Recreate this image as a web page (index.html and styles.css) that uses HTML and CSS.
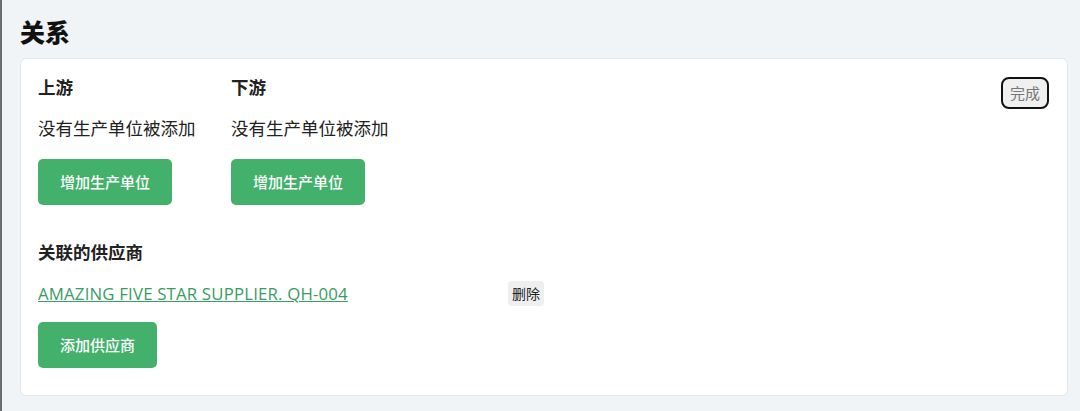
FILE: index.html
```html
<!DOCTYPE html>
<html lang="zh-CN">
<head>
    <meta charset="UTF-8">
    <meta name="viewport" content="width=device-width, initial-scale=1.0">
    <title>关系</title>
    <link rel="stylesheet" href="styles.css">
</head>
<body>
    <main class="page">
        <h1 class="page-title">关系</h1>
        <section class="card">
            <div class="units">
                <div class="unit-col unit-col-up">
                    <h3 class="section-title">上游</h3>
                    <p class="empty">没有生产单位被添加</p>
                    <button class="btn-green">增加生产单位</button>
                </div>
                <div class="unit-col">
                    <h3 class="section-title">下游</h3>
                    <p class="empty">没有生产单位被添加</p>
                    <button class="btn-green">增加生产单位</button>
                </div>
                <button class="btn-done">完成</button>
            </div>

            <h3 class="section-title suppliers-title">关联的供应商</h3>
            <div class="supplier-row">
                <a class="supplier-link" href="#">AMAZING FIVE STAR SUPPLIER. QH-004</a>
                <button class="btn-delete">删除</button>
            </div>
            <button class="btn-green btn-add">添加供应商</button>
        </section>
    </main>
</body>
</html>
```

FILE: styles.css
```css
body {
    margin: 0;
    background-color: #f1f4f7;
    font-family: "Noto Sans CJK SC", "Noto Sans", sans-serif;
    color: #222;
    border-left: 2px solid #6c6c6c;
    min-height: 411px;
    box-sizing: border-box;
}
.page {
    padding: 13px 12px 0 18px;
}
.page-title {
    margin: 0 0 9px;
    font-size: 25px;
    line-height: 36px;
    font-weight: 900;
    color: #111;
}
.card {
    background-color: #fff;
    border: 1px solid #e3e6ea;
    border-radius: 6px;
    padding: 14px 17px 27px 17px;
}
.units {
    display: flex;
    align-items: flex-start;
}
.unit-col {
    display: flex;
    flex-direction: column;
    align-items: flex-start;
}
.unit-col-up {
    width: 193px;
}
.section-title {
    margin: 0 0 14px;
    font-size: 17.5px;
    line-height: 27px;
    font-weight: 700;
    color: #222;
}
.empty {
    margin: 0 0 18px;
    font-size: 17.5px;
    line-height: 27px;
}
.btn-green {
    display: block;
    border: none;
    border-radius: 5px;
    background-color: #43b16c;
    color: #fff;
    font-family: "Noto Sans CJK SC", sans-serif;
    font-size: 15px;
    font-weight: 500;
    line-height: 22px;
    padding: 12px 22px;
    cursor: pointer;
}
.btn-done {
    margin: 4px 1px 0 auto;
    border: 2px solid #111;
    border-radius: 8px;
    background-color: #f0f0f0;
    color: #777;
    font-family: "Noto Sans CJK SC", sans-serif;
    font-size: 15px;
    line-height: 24px;
    padding: 2px 7px;
    cursor: pointer;
}
.suppliers-title {
    margin-top: 33px;
    margin-bottom: 16px;
}
.supplier-row {
    display: flex;
    align-items: center;
    margin-bottom: 16px;
}
.supplier-link {
    width: 470px;
    font-family: "Open Sans", "Noto Sans CJK SC", sans-serif;
    font-weight: 400;
    font-size: 16.8px;
    letter-spacing: 0.18px;
    color: #3a9b63;
    text-decoration: underline;
}
.btn-delete {
    border: none;
    border-radius: 4px;
    background-color: #efefef;
    color: #222;
    font-family: "Noto Sans CJK SC", sans-serif;
    font-size: 14px;
    line-height: 21px;
    padding: 2px 4px;
}
```
